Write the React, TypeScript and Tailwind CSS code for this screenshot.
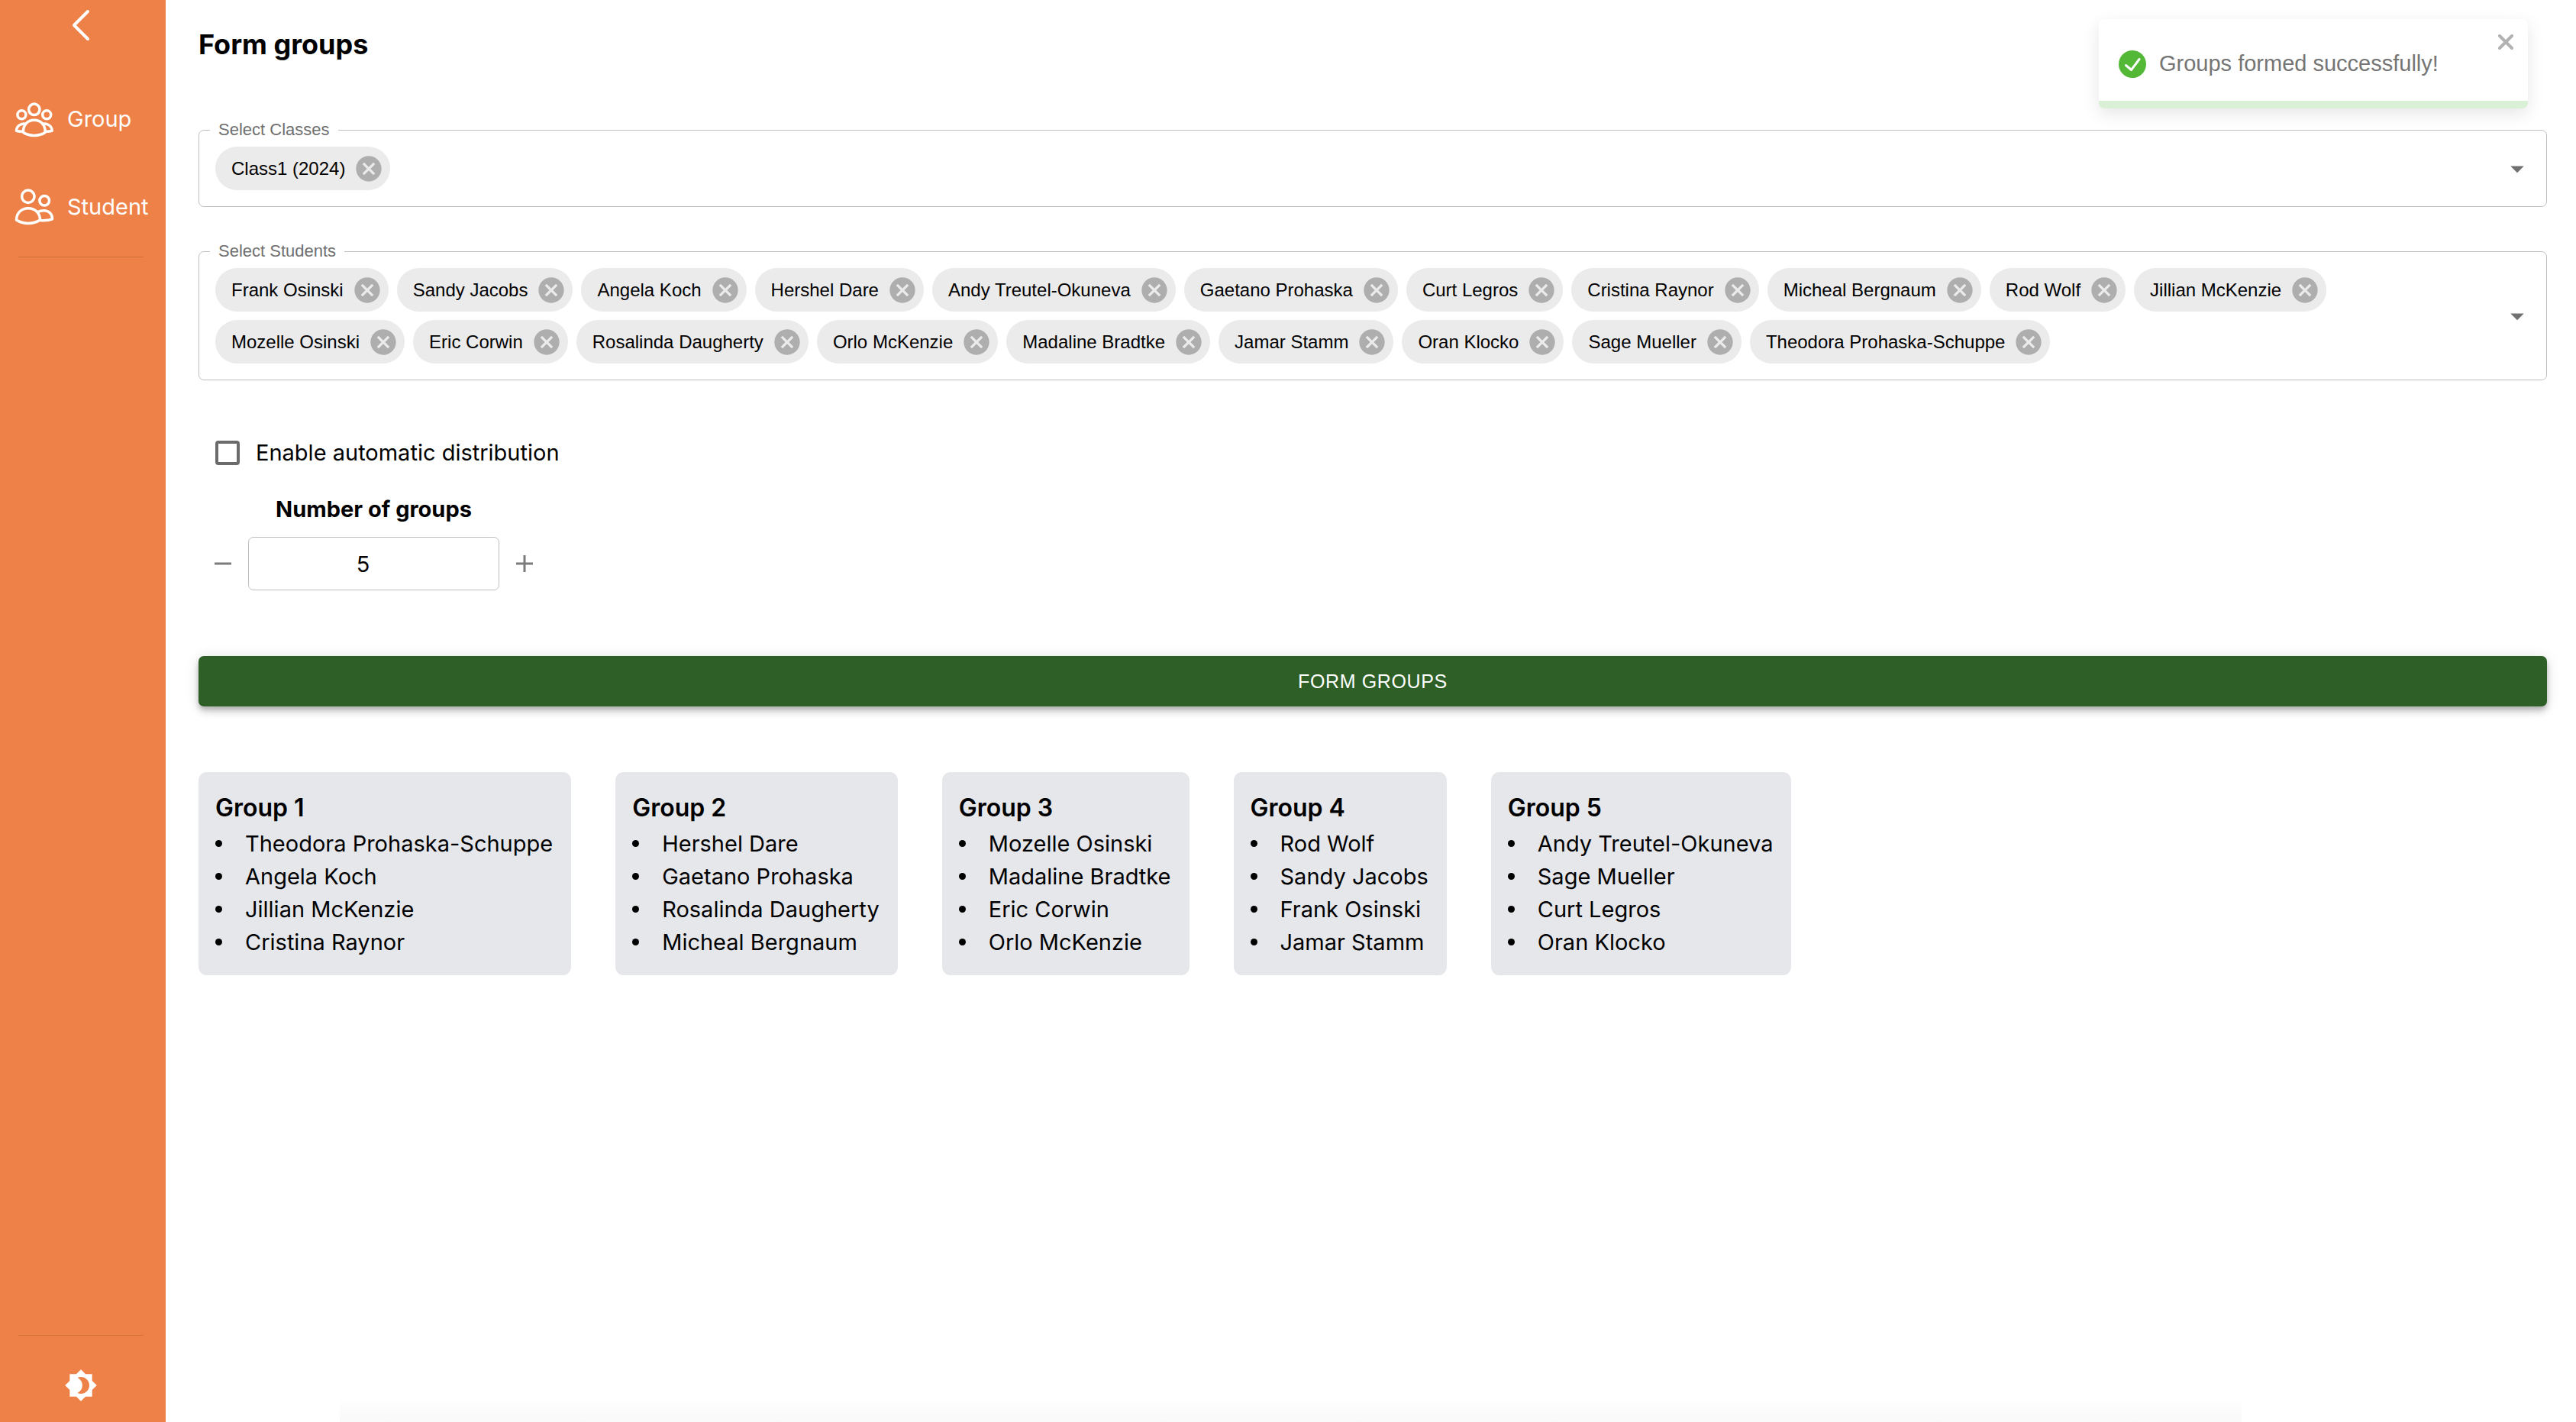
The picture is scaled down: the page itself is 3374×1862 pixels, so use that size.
import { useState } from "react";
import { MdBrightness4, MdCancel, MdArrowDropDown } from "react-icons/md";

const students = [
  "Frank Osinski", "Sandy Jacobs", "Angela Koch", "Hershel Dare", "Andy Treutel-Okuneva",
  "Gaetano Prohaska", "Curt Legros", "Cristina Raynor", "Micheal Bergnaum", "Rod Wolf",
  "Jillian McKenzie", "Mozelle Osinski", "Eric Corwin", "Rosalinda Daugherty", "Orlo McKenzie",
  "Madaline Bradtke", "Jamar Stamm", "Oran Klocko", "Sage Mueller", "Theodora Prohaska-Schuppe",
];

const groups = [
  ["Theodora Prohaska-Schuppe", "Angela Koch", "Jillian McKenzie", "Cristina Raynor"],
  ["Hershel Dare", "Gaetano Prohaska", "Rosalinda Daugherty", "Micheal Bergnaum"],
  ["Mozelle Osinski", "Madaline Bradtke", "Eric Corwin", "Orlo McKenzie"],
  ["Rod Wolf", "Sandy Jacobs", "Frank Osinski", "Jamar Stamm"],
  ["Andy Treutel-Okuneva", "Sage Mueller", "Curt Legros", "Oran Klocko"],
];

function GroupIcon() {
  return (
    <svg viewBox="0 0 52 52" className="size-13 shrink-0" fill="none" stroke="currentColor" strokeWidth="3.5" strokeLinejoin="round" aria-hidden="true">
      <circle cx="25.8" cy="14.3" r="7.2" />
      <circle cx="9.4" cy="21.3" r="5.5" />
      <circle cx="42.2" cy="21.3" r="5.5" />
      <path d="M11.300 44.300C11.300 34.500 17 28.300 25.800 28.300s14.500 6.200 14.500 16c-4 2.800-8.800 4.100-14.500 4.100s-10.500-1.300-14.500-4.100z" />
      <path d="M16 33.500C8.500 31.800 2.500 36 2.500 42.300c3 .9 6 1 9 .9" />
      <path d="M35.600 33.500C43.100 31.800 49.100 36 49.100 42.300c-3 .9-6 1-9 .9" />
    </svg>
  );
}

function StudentIcon() {
  return (
    <svg viewBox="0 0 52 52" className="size-13 shrink-0" fill="none" stroke="currentColor" strokeWidth="3.5" strokeLinejoin="round" aria-hidden="true">
      <circle cx="17.800" cy="13.300" r="8.200" />
      <circle cx="39.200" cy="18.700" r="6.300" />
      <path d="M2.500 44C2.500 35 9 28.700 18 28.700S33.500 35 33.500 44c-4.500 3-9.500 4.400-15.500 4.400S7 47 2.500 44z" />
      <path d="M30.500 33.500c2.500-1.300 5.500-1.800 8-1.800 6.500 0 11 4.300 11 11.100-4.500 1.900-10 2.200-16 1.700" />
    </svg>
  );
}

function Chip({ label }: { label: string }) {
  return (
    <span className="flex h-[57px] items-center rounded-full bg-[#ebebeb] pl-[21px] pr-[8px] text-[24px]">
      {label}
      <button type="button" aria-label={`Remove ${label}`} className="ml-[11px] text-[#aeaeae]">
        <MdCancel className="size-10" />
      </button>
    </span>
  );
}

function Picker({ label, items }: { label: string; items: string[] }) {
  return (
    <fieldset className="flex items-center rounded-[7px] border border-[#bfbfbf] pt-[11px] pr-[17px] pb-[21px] pl-[21px] font-['Liberation_Sans',sans-serif]">
      <legend className="-ml-[7px] h-[22px] px-[11px] text-[22px] leading-[22px] text-[#707070]">{label}</legend>
      <div className="flex flex-1 flex-wrap gap-[11px]">
        {items.map((item) => <Chip key={item} label={item} />)}
      </div>
      <button type="button" aria-label={`Open ${label}`} className="text-[#707070]">
        <MdArrowDropDown className="size-[42px]" />
      </button>
    </fieldset>
  );
}

export default function App() {
  const [count, setCount] = useState(5);
  return (
    <div className="flex min-h-screen bg-white font-['Inter',sans-serif] text-[29px] leading-[43px] text-black">
      <aside className="flex w-[217px] shrink-0 flex-col bg-[#ee8147] text-white">
        <button type="button" aria-label="Collapse menu" className="mt-[11px] ml-[93px] self-start">
          <svg viewBox="0 0 26 44" className="h-11 w-[26px]" fill="none" stroke="currentColor" strokeWidth="4" strokeLinecap="round" strokeLinejoin="round" aria-hidden="true">
            <path d="M22 4 4 22l18 18" />
          </svg>
        </button>
        <nav className="mt-[74px] flex flex-col gap-[63px] pl-[19px]">
          <a href="#group" className="flex items-center gap-[17px]"><GroupIcon />Group</a>
          <a href="#student" className="flex items-center gap-[17px]"><StudentIcon />Student</a>
        </nav>
        <hr className="mt-10 mr-[29px] ml-6 border-[#d26f3a]" />
        <hr className="mt-auto mr-[29px] ml-6 border-[#d26f3a]" />
        <button type="button" aria-label="Toggle theme" className="mt-[43px] mr-[5px] mb-[26px] self-center">
          <MdBrightness4 className="size-11" />
        </button>
      </aside>

      <main className="flex min-w-0 flex-1 flex-col pt-[33px] pr-[38px] pl-[43px]">
        <h1 className="text-[36px] leading-[50px] font-bold">Form groups</h1>
        <div className="mt-[76px] flex flex-col gap-[47px]">
          <Picker label="Select Classes" items={["Class1 (2024)"]} />
          <Picker label="Select Students" items={students} />
        </div>

        <label className="mt-[73px] flex items-center gap-[21px] self-start pl-[22px]">
          <input type="checkbox" className="size-8 appearance-none rounded-[4px] border-4 border-[#6b6b6b] checked:bg-[#6b6b6b]" />
          Enable automatic distribution
        </label>

        <div className="mt-[31px] flex flex-col items-center self-start pl-[21px]">
          <label htmlFor="count" className="font-bold">Number of groups</label>
          <div className="mt-[15px] flex items-center gap-[22px] text-[#7b7b7b]">
            <button type="button" aria-label="Fewer groups" onClick={() => setCount(count - 1)}>
              <svg viewBox="0 0 22 22" className="size-[22px]" fill="none" stroke="currentColor" strokeWidth="3" aria-hidden="true"><path d="M0 11h22" /></svg>
            </button>
            <input id="count" value={count} onChange={(e) => setCount(Number(e.target.value) || 0)} className="h-[70px] w-[329px] rounded-[7px] border border-[#bfbfbf] pr-[28px] text-center text-black" />
            <button type="button" aria-label="More groups" onClick={() => setCount(count + 1)}>
              <svg viewBox="0 0 22 22" className="size-[22px]" fill="none" stroke="currentColor" strokeWidth="3" aria-hidden="true"><path d="M0 11h22M11 0v22" /></svg>
            </button>
          </div>
        </div>

        <button type="button" className="mt-[86px] h-[66px] rounded-[7px] bg-[#2d5f27] font-['Liberation_Sans',sans-serif] text-[25px] tracking-wide text-white uppercase shadow-[0_4px_7px_-2px_rgba(0,0,0,0.2),0_7px_9px_rgba(0,0,0,0.14),0_2px_18px_rgba(0,0,0,0.12)]">
          Form groups
        </button>

        <div className="mt-[86px] flex flex-wrap items-start gap-[58px]">
          {groups.map((members, i) => (
            <section key={members[0]} className="rounded-[11px] bg-[#e5e7eb] py-[22px] pr-6 pl-[22px]">
              <h2 className="text-[32px] leading-[50px] font-semibold">Group {i + 1}</h2>
              <ul>
                {members.map((name) => (
                  <li key={name} className="flex items-center gap-[30px]">
                    <span className="size-[9px] rounded-full bg-black" />
                    {name}
                  </li>
                ))}
              </ul>
            </section>
          ))}
        </div>
        <div className="mt-auto mr-[13%] ml-[6%] h-8 bg-linear-to-t from-[#f9f9f9] to-white" />
      </main>

      <div role="status" className="absolute top-[25px] right-[63px] flex w-[562px] flex-col overflow-hidden rounded-[7px] bg-white font-['Liberation_Sans',sans-serif] text-[#757575] shadow-[0_7px_22px_rgba(0,0,0,0.1)]">
        <div className="flex h-[107px] items-start pr-[19px] pl-[26px]">
          <svg viewBox="0 0 36 36" className="mt-[41px] size-9" aria-hidden="true">
            <circle cx="18" cy="18" r="18" fill="#54b837" />
            <path d="M9.500 19.500 16.500 25.500 27 11.500" fill="none" stroke="white" strokeWidth="3" strokeLinecap="round" strokeLinejoin="round" />
          </svg>
          <p className="mt-[37px] ml-[17px] flex-1">Groups formed successfully!</p>
          <button type="button" aria-label="Close" className="mt-[20px] text-[#b2b2b2]">
            <svg viewBox="0 0 20 20" className="size-5" fill="none" stroke="currentColor" strokeWidth="4" strokeLinecap="round" aria-hidden="true"><path d="m2 2 16 16M18 2 2 18" /></svg>
          </button>
        </div>
        <div className="h-[10px] bg-[#daf0d6]" />
      </div>
    </div>
  );
}
